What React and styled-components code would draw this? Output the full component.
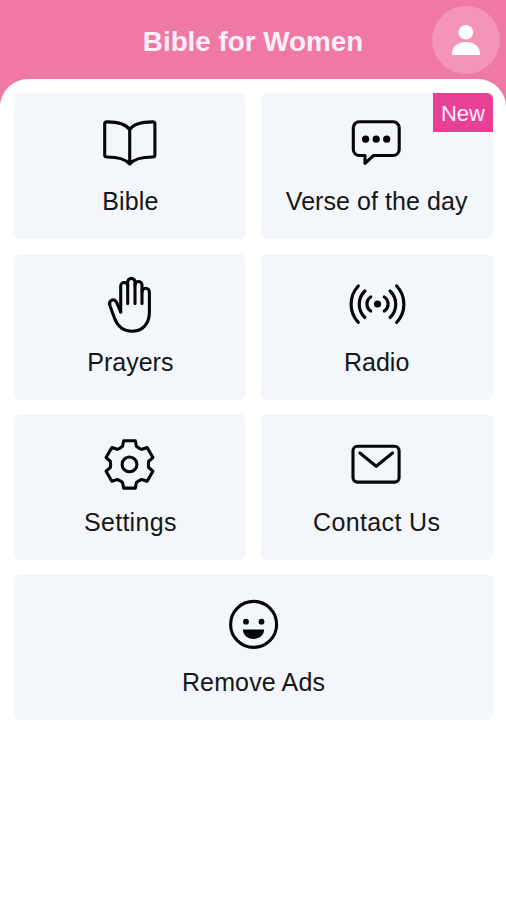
import React from "react";
import styled, { createGlobalStyle } from "styled-components";

const GlobalStyle = createGlobalStyle`
  * {
    box-sizing: border-box;
  }
  body {
    margin: 0;
    background: #fff;
    font-family: "Liberation Sans", Arial, sans-serif;
  }
`;

const gearPoints = [0, 60, 120, 180, 240, 300]
  .flatMap((deg) => {
    const a = (deg * Math.PI) / 180;
    return [
      [-9, -16.6],
      [-6.9, -18.2],
      [-5.8, -23.7],
      [5.8, -23.7],
      [6.9, -18.2],
      [9, -16.6],
    ].map(([x, y]) => [
      31.5 + x * Math.cos(a) - y * Math.sin(a),
      32.4 + x * Math.sin(a) + y * Math.cos(a),
    ]);
  })
  .map((point) => point.join(","))
  .join(" ");

const BookIcon = () => (
  <Icon>
    <path d="M31.7 18.7C28 13 19 10.9 9 10.9Q6.7 10.9 6.7 13V44Q6.7 46 9 46C19 46 27 47.3 31.7 53C36.4 47.3 44.6 46 54.6 46Q56.9 46 56.9 44V13Q56.9 10.9 54.6 10.9C44.6 10.9 35.4 13 31.7 18.7ZV53" />
  </Icon>
);

const ChatIcon = () => (
  <Icon>
    <path d="M14.3 10.8H48.2A6 6 0 0 1 54.2 16.8V38.5A6 6 0 0 1 48.2 44.5H28.5L20 52.3V44.5H14.3A6 6 0 0 1 8.3 38.5V16.8A6 6 0 0 1 14.3 10.8Z" />
    <Solid cx="20.6" cy="28.2" r="3.6" />
    <Solid cx="31.2" cy="28.2" r="3.6" />
    <Solid cx="41.7" cy="28.2" r="3.6" />
  </Icon>
);

const HandIcon = () => (
  <Icon>
    <path d="M22.7 40V14A3.5 3.5 0 0 1 29.7 14V31.5" />
    <path d="M29.7 14V10A3.6 3.6 0 0 1 37 10V31.5" />
    <path d="M37 13A3.5 3.5 0 0 1 44 13V31.5" />
    <path d="M44 20A3.7 3.7 0 0 1 51.4 20V40C51.4 52 44.5 59.2 34 59.2C24.5 59.2 19.5 54 16.6 46.5L11.9 33.5C10.3 28.3 16.3 25.3 18.6 30.3L22.7 40" />
  </Icon>
);

const RadioIcon = () => (
  <Icon strokeWidth="3.2">
    <Solid cx="32.5" cy="32" r="3.6" />
    <path d="M25.7 25A8.4 8.4 0 0 0 25.7 39" />
    <path d="M19.9 19A18.4 18.4 0 0 0 19.9 45.5" />
    <path d="M13.3 14A26.5 26.5 0 0 0 13.3 50.3" />
    <path d="M39.3 25A8.4 8.4 0 0 1 39.3 39" />
    <path d="M45.1 19A18.4 18.4 0 0 1 45.1 45.5" />
    <path d="M51.7 14A26.5 26.5 0 0 1 51.7 50.3" />
  </Icon>
);

const GearIcon = () => (
  <Icon>
    <polygon points={gearPoints} />
    <circle cx="31.5" cy="32.4" r="7.4" />
  </Icon>
);

const MailIcon = () => (
  <Icon>
    <rect x="8" y="14.3" width="46.1" height="35.8" rx="4.5" />
    <path d="M14.9 21L31.2 34.3L47.5 21" />
  </Icon>
);

const SmileIcon = () => (
  <Icon>
    <circle cx="31.6" cy="32.4" r="23" />
    <Solid cx="24" cy="29.7" r="2.9" />
    <Solid cx="39.5" cy="29.7" r="2.9" />
    <path
      d="M20.9 37.4H42.1C42.2 43 37.7 46.9 31.5 46.9S20.8 43 20.9 37.4Z"
      fill="#050505"
      stroke="none"
    />
  </Icon>
);

const tiles = [
  { label: "Bible", icon: BookIcon, tracking: 0.15 },
  { label: "Verse of the day", icon: ChatIcon, badge: "New", tracking: 0.07 },
  { label: "Prayers", icon: HandIcon },
  { label: "Radio", icon: RadioIcon },
  { label: "Settings", icon: GearIcon, tracking: 0.3 },
  { label: "Contact Us", icon: MailIcon, tracking: 0.35 },
  { label: "Remove Ads", icon: SmileIcon, wide: true, tracking: 0.15 },
];

const App = () => (
  <>
    <GlobalStyle />
    <Screen>
      <Header>
        <Title>Bible for Women</Title>
        <Avatar aria-label="Profile">
          <svg width="28" height="32" viewBox="0 0 28 32" fill="#fff">
            <circle cx="13.8" cy="8.3" r="7.3" />
            <path d="M0 31V29.5C0 22.5 6 18 14 18S28 22.5 28 29.5V31Z" />
          </svg>
        </Avatar>
      </Header>
      <Sheet>
        <Grid>
          {tiles.map(({ label, icon: TileIcon, badge, wide, tracking }) => (
            <Tile key={label} $wide={wide}>
              <TileIcon />
              <Label $tracking={tracking}>{label}</Label>
              {badge && <Badge>{badge}</Badge>}
            </Tile>
          ))}
        </Grid>
      </Sheet>
    </Screen>
  </>
);

const Screen = styled.div`
  display: flex;
  flex-direction: column;
  height: 900px;
  background: #f078a6;
  overflow: hidden;
`;

const Header = styled.header`
  display: grid;
  grid-template-columns: 1fr auto 1fr;
  align-items: center;
  flex: none;
  height: 79.2px;
  padding: 0 6px;
`;

const Title = styled.h1`
  grid-column: 2;
  margin: 0;
  padding-top: 5px;
  color: #fff0f6;
  font-size: 27.8px;
  font-weight: 700;
  line-height: 32px;
`;

const Avatar = styled.button`
  display: flex;
  align-items: center;
  justify-content: center;
  justify-self: end;
  width: 68px;
  height: 68px;
  padding: 0;
  border: 0;
  border-radius: 50%;
  background: #f494b9;
`;

const Sheet = styled.main`
  flex: 1;
  padding: 14.2px 13.3px 0 14.3px;
  border-radius: 28px 28px 0 0;
  background: #fff;
`;

const Grid = styled.div`
  display: grid;
  grid-template-columns: 1fr 1fr;
  grid-auto-rows: 146px;
  gap: 14.3px;
`;

const Tile = styled.div`
  position: relative;
  display: flex;
  flex-direction: column;
  align-items: center;
  grid-column: ${({ $wide }) => ($wide ? "1 / -1" : "auto")};
  padding-top: 18px;
  border-radius: 6px;
  background: #f3f6fa;
  overflow: hidden;
`;

const Icon = styled.svg.attrs({ viewBox: "0 0 64 64" })`
  flex: none;
  width: 64px;
  height: 64px;
  fill: none;
  stroke: #050505;
  stroke-width: ${({ strokeWidth }) => strokeWidth || 3.1};
  stroke-linecap: round;
  stroke-linejoin: round;
`;

const Solid = styled.circle`
  fill: #050505;
  stroke: none;
`;

const Label = styled.span`
  margin-top: 11px;
  color: #161616;
  font-size: 25px;
  line-height: 30px;
  letter-spacing: ${({ $tracking }) => $tracking || 0}px;
`;

const Badge = styled.span`
  position: absolute;
  top: 0;
  right: 0;
  width: 59.5px;
  height: 39px;
  color: #fff0f8;
  background: #e84095;
  font-size: 22px;
  line-height: 41px;
  text-align: center;
`;

export default App;
